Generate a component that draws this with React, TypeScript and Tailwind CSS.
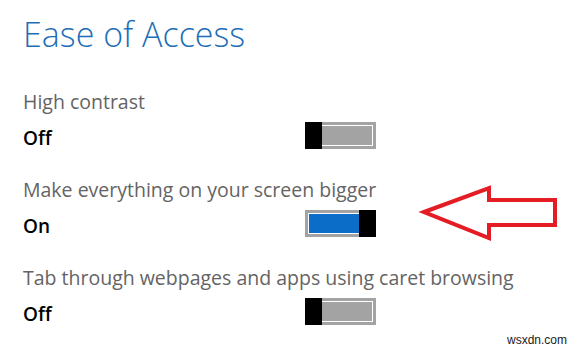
import React from "react";

const font = { fontFamily: '"Open Sans", "Noto Sans", sans-serif' };

const Toggle = ({ on }: { on: boolean }) => {
  return (
    <div className="relative w-[71px] h-[27px] bg-[#a3a3a3] p-[3px]">
      <div
        className={
          "h-full w-full border border-white " +
          (on ? "bg-[#0b6dc8]" : "bg-[#a3a3a3]")
        }
      ></div>
      <div
        className={
          "absolute top-0 h-full w-[17px] bg-black " +
          (on ? "right-0" : "left-0")
        }
      ></div>
    </div>
  );
};

const Setting = ({ label, on }: { label: string; on: boolean }) => {
  return (
    <div className="h-[88px]">
      <div className="text-[19.5px] leading-[28px] text-[#646464]">{label}</div>
      <div className="mt-[6px] flex items-center h-[27px]">
        <div className="w-[282px] pt-[5px] text-[19px] leading-[27px] font-semibold text-black">
          {on ? "On" : "Off"}
        </div>
        <Toggle on={on} />
      </div>
    </div>
  );
};

export default function App() {
  return (
    <div className="relative w-[581px] h-[352px] bg-white overflow-hidden" style={font}>
      <div className="pl-[23px] pt-[17px]">
        <h1 className="text-[34px] leading-[35px] font-light text-[#1e6fb8]">
          Ease of Access
        </h1>
        <div className="mt-[36px]">
          <Setting label="High contrast" on={false} />
          <Setting label="Make everything on your screen bigger" on={true} />
          <Setting label="Tab through webpages and apps using caret browsing" on={false} />
        </div>
      </div>

      {/* red arrow pointing at the toggle */}
      <svg className="absolute left-0 top-0" width="581" height="352">
        <polygon
          points="424,212 489,188 489,200 555,200 555,225 489,225 489,238"
          fill="none"
          stroke="#e41d25"
          strokeWidth="4"
          strokeLinejoin="miter"
        />
      </svg>

      <div
        className="absolute left-[507px] top-[333px] text-[12px] leading-[14px] text-[#1a1a1a]"
        style={{ fontFamily: '"Liberation Sans", Arial, sans-serif' }}
      >
        wsxdn.com
      </div>
    </div>
  );
}
